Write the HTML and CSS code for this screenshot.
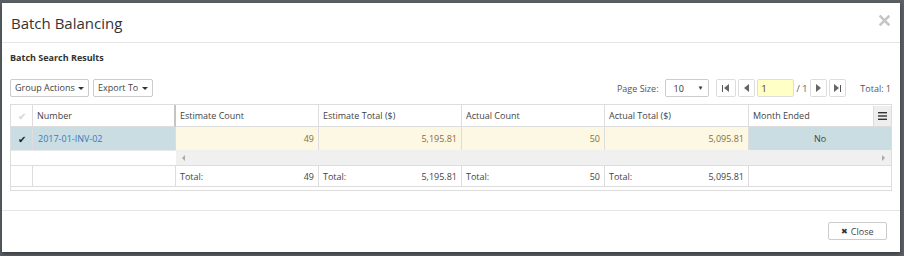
FILE: index.html
```html
<!DOCTYPE html>
<html lang="en">
<head>
  <meta charset="UTF-8">
  <title>Batch Balancing</title>
  <link rel="stylesheet" href="styles.css">
</head>
<body>
  <div class="modal">
    <div class="modal-header">
      <h1 class="modal-title">Batch Balancing</h1>
      <svg class="close-x" width="11" height="11" viewBox="0 0 11 11">
        <path d="M1.5 1.5 L9.5 9.5 M9.5 1.5 L1.5 9.5" stroke="#c6c6c6" stroke-width="2.6" stroke-linecap="square"/>
      </svg>
    </div>

    <div class="modal-body">
      <h2 class="section-title">Batch Search Results</h2>

      <div class="toolbar">
        <div class="toolbar-left">
          <button class="btn">Group Actions <span class="caret"></span></button>
          <button class="btn">Export To <span class="caret"></span></button>
        </div>
        <div class="pager">
          <span class="pager-label">Page Size:</span>
          <div class="page-size">10 <span class="select-arrow">&#9660;</span></div>
          <button class="pager-btn first"><span class="bar"></span><span class="tri-left"></span></button>
          <button class="pager-btn prev"><span class="tri-left"></span></button>
          <input class="page-input" type="text" value="1">
          <span class="page-count">/ 1</span>
          <button class="pager-btn next"><span class="tri-right"></span></button>
          <button class="pager-btn last"><span class="tri-right"></span><span class="bar"></span></button>
          <span class="pager-total">Total: 1</span>
        </div>
      </div>

      <div class="grid">
        <div class="cell head check-cell"><span class="check faint">&#10004;</span></div>
        <div class="cell head frozen-edge">Number</div>
        <div class="cell head">Estimate Count</div>
        <div class="cell head">Estimate Total ($)</div>
        <div class="cell head">Actual Count</div>
        <div class="cell head">Actual Total ($)</div>
        <div class="cell head last-col">Month Ended
          <span class="menu-btn">
            <svg width="9" height="8" viewBox="0 0 9 8"><rect y="0" width="9" height="1.4" fill="#333"/><rect y="3.3" width="9" height="1.4" fill="#333"/><rect y="6.6" width="9" height="1.4" fill="#333"/></svg>
          </span>
        </div>

        <div class="cell row selected check-cell"><span class="check">&#10004;</span></div>
        <div class="cell row selected frozen-edge"><a class="link" href="#">2017-01-INV-02</a></div>
        <div class="cell row calc num">49</div>
        <div class="cell row calc num">5,195.81</div>
        <div class="cell row calc num">50</div>
        <div class="cell row calc num">5,095.81</div>
        <div class="cell row selected center last-col">No</div>

        <div class="scroll-frozen"></div>
        <div class="scroll-bar">
          <span class="tri-left small"></span>
          <span class="tri-right small"></span>
        </div>

        <div class="cell foot check-cell"></div>
        <div class="cell foot frozen-edge"></div>
        <div class="cell foot sum"><span>Total:</span><span>49</span></div>
        <div class="cell foot sum"><span>Total:</span><span>5,195.81</span></div>
        <div class="cell foot sum"><span>Total:</span><span>50</span></div>
        <div class="cell foot sum"><span>Total:</span><span>5,095.81</span></div>
        <div class="cell foot last-col"></div>

        <div class="grid-bottom"></div>
      </div>
    </div>

    <div class="modal-footer">
      <button class="btn close-btn"><span class="close-icon">&#10006;</span> Close</button>
    </div>
  </div>
</body>
</html>
```

FILE: styles.css
```css
:root {
  --border: #dddddd;
  --text: #444444;
  --selected: #c9dde2;
  --calc: #fdf8e4;
  --calc-text: #8a6d3b;
}

* {
  box-sizing: border-box;
}

body {
  margin: 0;
  padding: 3px 4px 0 2px;
  height: 256px;
  overflow: hidden;
  background: #5b6066;
  font-family: 'Open Sans', sans-serif;
  font-size: 9px;
  color: var(--text);
}

.modal {
  background: #ffffff;
  height: 249px;
  box-shadow: 0 2px 4px rgba(0, 0, 0, 0.4);
}

.modal-header {
  display: flex;
  justify-content: space-between;
  align-items: center;
  height: 40px;
  padding: 0 10px 0 9px;
  border-bottom: 1px solid #e5e5e5;
}

.modal-title {
  margin: 0;
  font-size: 15px;
  font-weight: normal;
  color: #333;
}

.close-x {
  margin-top: -5px;
}

.modal-body {
  padding: 8px 8px 0 8px;
  height: 168px;
  border-bottom: 1px solid #e5e5e5;
}

.section-title {
  margin: 0;
  font-size: 9px;
  font-weight: bold;
  line-height: 14px;
  color: #333;
}

.toolbar {
  display: flex;
  justify-content: space-between;
  align-items: center;
  margin-top: 14px;
  height: 18px;
}

.toolbar-left {
  display: flex;
  gap: 4px;
}

.btn {
  font-family: inherit;
  font-size: 9px;
  color: var(--text);
  background: #ffffff;
  border: 1px solid #cccccc;
  border-radius: 2px;
  height: 18px;
  padding: 0 4px;
  line-height: 16px;
  cursor: pointer;
}

.caret {
  display: inline-block;
  width: 0;
  height: 0;
  border-left: 3px solid transparent;
  border-right: 3px solid transparent;
  border-top: 3px solid #333;
  vertical-align: middle;
  margin-left: 1px;
}

.pager {
  display: flex;
  align-items: center;
  color: #555;
}

.pager-label {
  margin-right: 6px;
}

.page-size {
  display: flex;
  justify-content: space-between;
  align-items: center;
  width: 44px;
  height: 18px;
  border: 1px solid #cccccc;
  border-radius: 2px;
  padding: 0 4px 0 8px;
  color: #333;
}

.select-arrow {
  font-size: 6px;
}

.pager-btn {
  display: flex;
  justify-content: center;
  align-items: center;
  height: 18px;
  width: 17px;
  margin-left: 2px;
  padding: 0;
  background: #fff;
  border: 1px solid #dddddd;
  border-radius: 2px;
}

.pager-btn.first {
  margin-left: 7px;
  width: 20px;
}

.bar {
  display: inline-block;
  width: 1px;
  height: 7px;
  background: #555;
}

.tri-left,
.tri-right {
  display: inline-block;
  width: 0;
  height: 0;
  border-top: 4px solid transparent;
  border-bottom: 4px solid transparent;
}

.tri-left {
  border-right: 5px solid #666;
}

.tri-right {
  border-left: 5px solid #666;
}

.first .bar {
  margin-right: 1px;
}

.last .bar {
  margin-left: 1px;
}

.page-input {
  width: 37px;
  height: 18px;
  margin-left: 2px;
  padding: 0 0 0 4px;
  border: 1px solid #dddddd;
  border-radius: 2px;
  background: #ffffc6;
  font-family: inherit;
  font-size: 9px;
  color: #333;
}

.page-count {
  margin: 0 1px 0 3px;
}

.pager-total {
  margin-left: 14px;
  margin-right: 1px;
}

.grid {
  display: grid;
  grid-template-columns: 22px 143px 143px 143px 143px 144px 1fr;
  margin-top: 7px;
  width: 882px;
  border: 1px solid var(--border);
}

.cell {
  display: flex;
  align-items: center;
  padding: 0 4px;
  border-right: 1px solid var(--border);
  white-space: nowrap;
}

.cell.last-col {
  border-right: none;
}

.head {
  height: 22px;
  border-bottom: 1px solid var(--border);
  padding-left: 4px;
}

.head.frozen-edge {
  border-right: 2px solid #c4c4c4;
}

.head.last-col {
  justify-content: space-between;
  padding-right: 0;
}

.menu-btn {
  display: flex;
  justify-content: center;
  align-items: center;
  width: 18px;
  height: 20px;
  background: #eeeeee;
  border-left: 1px solid #dddddd;
}

.check-cell {
  justify-content: center;
  padding: 0;
}

.check {
  font-size: 10px;
  color: #222;
}

.check.faint {
  color: #d4d4d4;
}

.row {
  height: 23px;
}

.selected {
  background: var(--selected);
}

.calc {
  background: var(--calc);
  color: var(--calc-text);
}

.num {
  justify-content: flex-end;
}

.center {
  justify-content: center;
}

.link {
  color: #3a7bbf;
  text-decoration: none;
  padding-left: 1px;
}

.scroll-frozen {
  grid-column: 1 / 3;
  height: 16px;
  border-top: 1px solid #e8e8e8;
  border-bottom: 1px solid var(--border);
}

.scroll-bar {
  grid-column: 3 / -1;
  display: flex;
  justify-content: space-between;
  align-items: center;
  height: 16px;
  padding: 0 6px;
  background: #f0f0f0;
  border-bottom: 1px solid var(--border);
}

.small.tri-left {
  border-top-width: 3px;
  border-bottom-width: 3px;
  border-right: 3px solid #aaa;
}

.small.tri-right {
  border-top-width: 3px;
  border-bottom-width: 3px;
  border-left: 3px solid #aaa;
}

.foot {
  height: 21px;
  border-bottom: 1px solid var(--border);
}

.sum {
  justify-content: space-between;
  padding-left: 4px;
}

.grid-bottom {
  grid-column: 1 / -1;
  height: 3px;
}

.modal-footer {
  display: flex;
  justify-content: flex-end;
  padding: 11px 13px 0 0;
}

.close-btn {
  width: 59px;
  height: 18px;
  padding: 0;
}

.close-icon {
  font-size: 8px;
  color: #333;
  vertical-align: 1px;
}
```
